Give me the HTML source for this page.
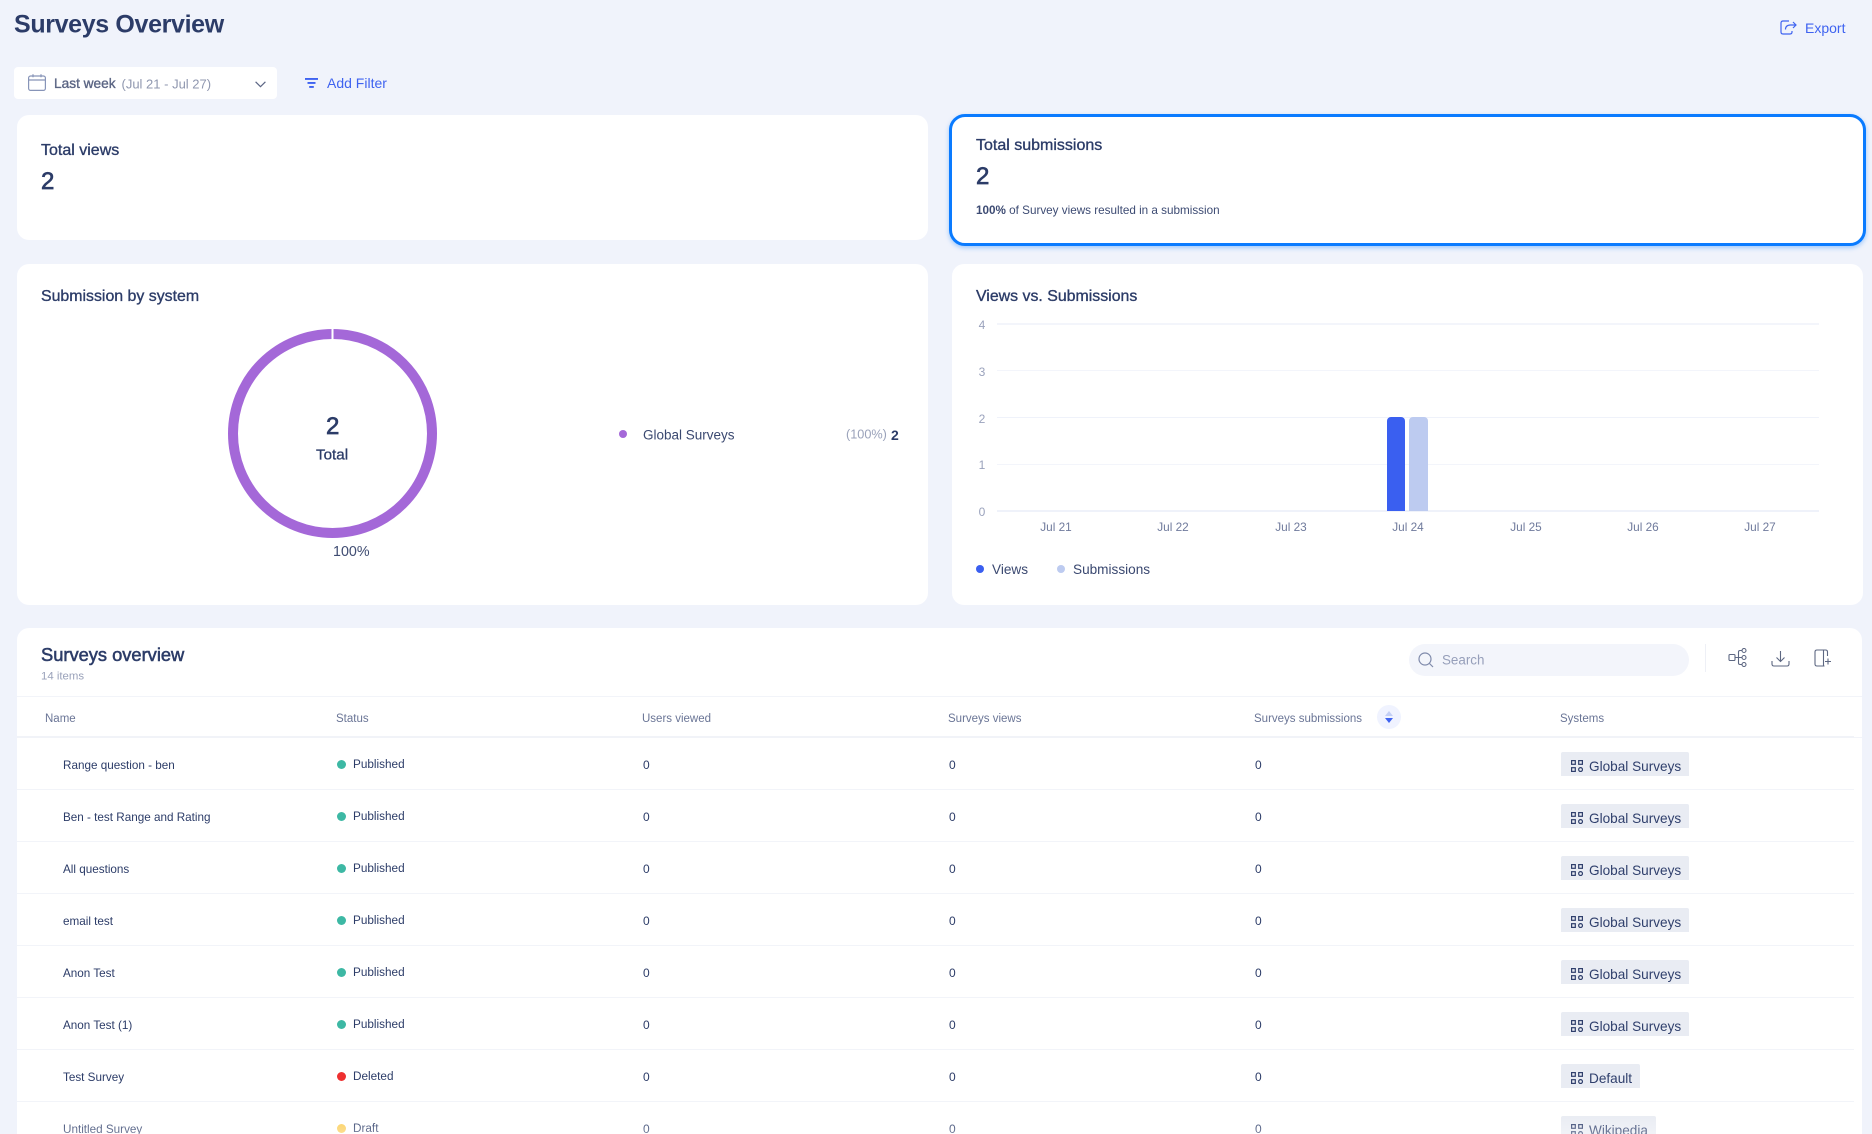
<!DOCTYPE html>
<html><head><meta charset="utf-8"><title>Surveys Overview</title>
<style>
html,body{margin:0;padding:0;width:1872px;height:1134px;overflow:hidden;background:#f0f3fb}
body{position:relative;font-family:"Liberation Sans",sans-serif;color:#2c3c68;filter:blur(.3px)}
.c{position:absolute;background:#fff;border-radius:12px;box-sizing:border-box}
.t{position:absolute;white-space:nowrap;transform:translateY(-50%);line-height:1}
.m{-webkit-text-stroke:.35px currentColor}
.d{position:absolute;border-radius:50%}
.g{position:absolute;left:997px;width:822px;background:#f3f5fb}
.x{position:absolute;top:520px;width:60px;text-align:center;font-size:11.8px;color:#6f7a9c;line-height:14px}
.y{position:absolute;left:976px;width:12px;text-align:center;font-size:12px;color:#9aa2bc;line-height:14px}
.h{position:absolute;top:712px;font-size:11.5px;line-height:14px;color:#6a7596;white-space:nowrap}
.r{position:absolute;left:17px;width:1837px;height:52px;border-bottom:1px solid #f2f4f9;box-sizing:border-box}
.r>*{position:absolute;white-space:nowrap}
.n{left:46px;top:20.5px;font-size:11.7px;line-height:14px}
.o{left:319.5px;top:21.5px;width:9px;height:9px;border-radius:50%}
.s{left:336px;top:19.5px;font-size:11.75px;line-height:14px}
.z{top:19.5px;font-size:12px;line-height:14px}
.a{left:1544px;top:14px;height:24px;background:#e9ecf3;border-radius:2px 2px 0 0;overflow:hidden;font-size:13.6px;line-height:30px;padding:0 8px 0 28px;color:#2f3f6c}
.a svg{position:absolute;left:10px;top:8px}
svg{display:block}
</style></head><body>
<svg width="0" height="0" style="position:absolute"><defs><symbol id="gr" viewBox="0 0 12 12"><g fill="none" stroke="#2f3f6c" stroke-width="1.2"><rect x=".6" y=".6" width="3.7" height="3.7"/><rect x="7.700" y=".6" width="3.7" height="3.7"/><rect x=".6" y="7.700" width="3.7" height="3.7"/><circle cx="9.550" cy="9.550" r="1.900"/></g></symbol></defs></svg>

<div class="t" style="left:14px;top:25px;font-size:25px;font-weight:700;color:#2c3c68;letter-spacing:-.35px">Surveys Overview</div>
<svg style="position:absolute;left:1780px;top:20px" width="17" height="15" viewBox="0 0 17 15" fill="none" stroke="#3f63f0" stroke-width="1.2"><path d="M9 1H3Q1 1 1 3v9q0 2 2 2h7q2 0 2-2v-1"/><path d="M5.5 9.500q0-4.500 5-4.500H16M13 2l3 3-3 3"/></svg>
<div class="t" style="left:1805px;top:28px;font-size:14px;color:#3f63f0">Export</div>

<div class="c" style="left:14px;top:67px;width:263px;height:32px;border-radius:4px"></div>
<svg style="position:absolute;left:28px;top:74px" width="18" height="17" viewBox="0 0 18 17" fill="none" stroke="#8794b8" stroke-width="1.2"><rect x=".6" y="2" width="16.8" height="14.4" rx="2"/><path d="M.6 6h16.8M5 .3v3M13 .3v3"/></svg>
<div class="t m" style="left:54px;top:83.500px;font-size:13.700px;color:#5b6584;-webkit-text-stroke-width:.35px">Last week</div>
<div class="t" style="left:121.500px;top:83.500px;font-size:13px;color:#8f97af">(Jul 21 - Jul 27)</div>
<svg style="position:absolute;left:255px;top:81px" width="11" height="7" viewBox="0 0 11 7" fill="none" stroke="#5b6584" stroke-width="1.2"><path d="M.6.8l4.9 4.9L10.4.8"/></svg>
<svg style="position:absolute;left:305px;top:78px" width="13" height="10" viewBox="0 0 13 10" fill="#3f63f0"><rect width="13" height="1.900"/><rect x="2.500" y="4" width="8" height="1.900"/><rect x="4.200" y="8" width="4.600" height="1.900"/></svg>
<div class="t" style="left:327px;top:83px;font-size:14px;color:#3f63f0">Add Filter</div>

<div class="c" style="left:17px;top:115px;width:911px;height:125px"></div>
<div class="t m" style="left:41px;top:151px;font-size:16px">Total views</div>
<div class="t m" style="left:41px;top:182px;font-size:24px;-webkit-text-stroke-width:.7px">2</div>

<div class="c" style="left:949px;top:114px;width:917px;height:132px;border:3px solid #0a7bff;border-radius:16px;box-shadow:0 2px 5px rgba(10,123,255,.35)"></div>
<div class="t m" style="left:976px;top:146px;font-size:16px">Total submissions</div>
<div class="t m" style="left:976px;top:177px;font-size:24px;-webkit-text-stroke-width:.7px">2</div>
<div class="t" style="left:976px;top:211px;font-size:11.7px;color:#3d4b73"><b>100%</b> of Survey views resulted in a submission</div>

<div class="c" style="left:17px;top:264px;width:911px;height:341px"></div>
<div class="t m" style="left:41px;top:297px;font-size:15.900px">Submission by system</div>
<svg style="position:absolute;left:228px;top:329px" width="209" height="209" viewBox="0 0 209 209"><circle cx="104.500" cy="104.500" r="99.500" fill="none" stroke="#a468d8" stroke-width="10"/><rect x="103.500" y="0" width="2" height="11" fill="#fff"/></svg>
<div class="t m" style="left:326px;top:427px;font-size:24px;-webkit-text-stroke-width:.7px">2</div>
<div class="t m" style="left:316px;top:455px;font-size:15.200px;-webkit-text-stroke-width:.3px">Total</div>
<div class="t" style="left:333px;top:551.500px;font-size:14.300px;color:#3f4c72">100%</div>
<div class="d" style="left:619px;top:430px;width:8px;height:8px;background:#a468d8"></div>
<div class="t" style="left:643px;top:435px;font-size:13.500px;color:#3a4870">Global Surveys</div>
<div class="t" style="left:846px;top:435px;font-size:12.700px;color:#9aa2ba">(100%)</div>
<div class="t" style="left:891px;top:435px;font-size:14px;font-weight:700">2</div>

<div class="c" style="left:952px;top:264px;width:911px;height:341px"></div>
<div class="t m" style="left:976px;top:297px;font-size:15.900px">Views vs. Submissions</div>
<div class="g" style="top:323px;height:2px"></div>
<div class="g" style="top:370px;height:1px"></div>
<div class="g" style="top:416.500px;height:1.500px;background:#eff2fa"></div>
<div class="g" style="top:464px;height:1px"></div>
<div class="g" style="top:510px;height:2px;background:#eff2fa"></div>
<div class="y" style="top:318px">4</div><div class="y" style="top:365px">3</div><div class="y" style="top:412px">2</div><div class="y" style="top:458px">1</div><div class="y" style="top:505px">0</div>
<div style="position:absolute;left:1387px;top:417px;width:18px;height:94px;background:#3a5ff0;border-radius:4px 4px 0 0"></div>
<div style="position:absolute;left:1409px;top:417px;width:18.500px;height:94px;background:#bdcbf0;border-radius:4px 4px 0 0"></div>
<div class="x" style="left:1026px">Jul 21</div><div class="x" style="left:1143px">Jul 22</div><div class="x" style="left:1261px">Jul 23</div><div class="x" style="left:1378px">Jul 24</div><div class="x" style="left:1496px">Jul 25</div><div class="x" style="left:1613px">Jul 26</div><div class="x" style="left:1730px">Jul 27</div>
<div class="d" style="left:976px;top:565px;width:8px;height:8px;background:#3a5ff0"></div>
<div class="t" style="left:992px;top:569.500px;font-size:13.600px;color:#3a4870">Views</div>
<div class="d" style="left:1057px;top:565px;width:8px;height:8px;background:#bdcbf0"></div>
<div class="t" style="left:1073px;top:569.500px;font-size:13.600px;color:#3a4870">Submissions</div>

<div class="c" style="left:17px;top:628px;width:1845px;height:520px"></div>
<div class="t m" style="left:41px;top:655px;font-size:18.300px;-webkit-text-stroke-width:.55px">Surveys overview</div>
<div class="t" style="left:41px;top:677px;font-size:11.400px;color:#9aa2ba">14 items</div>
<div style="position:absolute;left:1409px;top:644px;width:280px;height:32px;border-radius:16px;background:#f3f5fb"></div>
<svg style="position:absolute;left:1418px;top:652px" width="16" height="16" viewBox="0 0 16 16" fill="none" stroke="#7f8aab" stroke-width="1.2"><circle cx="7" cy="7" r="6"/><path d="M11.500 11.500L15 15"/></svg>
<div class="t" style="left:1442px;top:660px;font-size:13.400px;color:#969fba">Search</div>
<div style="position:absolute;left:1705px;top:644px;width:1px;height:28px;background:#eef0f6"></div>
<svg style="position:absolute;left:1728px;top:648px" width="20" height="19" viewBox="0 0 20 19" fill="none" stroke="#5d6782" stroke-width="1.1"><rect x="1" y="6.500" width="6" height="6" rx="1"/><path d="M7 9.500h7M10.500 4v11q0 1.500 1.500 1.500h2M10.500 4q0-1.500 1.500-1.500h2"/><circle cx="16" cy="2.500" r="2"/><circle cx="16" cy="9.500" r="2"/><circle cx="16" cy="16.500" r="2"/></svg>
<svg style="position:absolute;left:1771px;top:650px" width="19" height="17" viewBox="0 0 19 17" fill="none" stroke="#5d6782" stroke-width="1.1"><path d="M9.500 1v10M5.500 7.500l4 4 4-4"/><path d="M1 11v3q0 2 2 2h13q2 0 2-2v-3"/></svg>
<svg style="position:absolute;left:1814px;top:649px" width="18" height="18" viewBox="0 0 18 18" fill="none" stroke="#5d6782" stroke-width="1.1"><path d="M13.500 7V3q0-2-2-2H3Q1 1 1 3v12q0 2 2 2h6.500V1"/><path d="M9.500 17h1M14 9.500v6M11 12.500h6"/></svg>
<div style="position:absolute;left:17px;top:696px;width:1845px;height:1px;background:#f2f4f9"></div>
<div class="h" style="left:45px">Name</div>
<div class="h" style="left:336px">Status</div>
<div class="h" style="left:642px">Users viewed</div>
<div class="h" style="left:948px">Surveys views</div>
<div class="h" style="left:1254px">Surveys submissions</div>
<div class="h" style="left:1560px">Systems</div>
<div style="position:absolute;left:1377px;top:705px;width:24px;height:24px;border-radius:12px;background:#f0f3ff"></div>
<svg style="position:absolute;left:1385px;top:711px" width="8" height="12" viewBox="0 0 8 12"><path d="M4 0L8 5H0z" fill="#c3cff5"/><path d="M0 7h8l-4 5z" fill="#3f63f0"/></svg>
<div style="position:absolute;left:17px;top:736px;width:1837px;height:2px;background:#f1f3f8"></div>
<div style="position:absolute;left:1854px;top:737px;width:8px;height:1px;background:#f2f4f9"></div>

<div class="r" style="top:738px"><span class="n">Range question - ben</span><i class="o" style="background:#3db8a4"></i><span class="s">Published</span><span class="z" style="left:626px">0</span><span class="z" style="left:932px">0</span><span class="z" style="left:1238px">0</span><span class="a"><svg width="12" height="12"><use href="#gr"/></svg>Global Surveys</span></div>
<div class="r" style="top:790px"><span class="n">Ben - test Range and Rating</span><i class="o" style="background:#3db8a4"></i><span class="s">Published</span><span class="z" style="left:626px">0</span><span class="z" style="left:932px">0</span><span class="z" style="left:1238px">0</span><span class="a"><svg width="12" height="12"><use href="#gr"/></svg>Global Surveys</span></div>
<div class="r" style="top:842px"><span class="n">All questions</span><i class="o" style="background:#3db8a4"></i><span class="s">Published</span><span class="z" style="left:626px">0</span><span class="z" style="left:932px">0</span><span class="z" style="left:1238px">0</span><span class="a"><svg width="12" height="12"><use href="#gr"/></svg>Global Surveys</span></div>
<div class="r" style="top:894px"><span class="n">email test</span><i class="o" style="background:#3db8a4"></i><span class="s">Published</span><span class="z" style="left:626px">0</span><span class="z" style="left:932px">0</span><span class="z" style="left:1238px">0</span><span class="a"><svg width="12" height="12"><use href="#gr"/></svg>Global Surveys</span></div>
<div class="r" style="top:946px"><span class="n">Anon Test</span><i class="o" style="background:#3db8a4"></i><span class="s">Published</span><span class="z" style="left:626px">0</span><span class="z" style="left:932px">0</span><span class="z" style="left:1238px">0</span><span class="a"><svg width="12" height="12"><use href="#gr"/></svg>Global Surveys</span></div>
<div class="r" style="top:998px"><span class="n">Anon Test (1)</span><i class="o" style="background:#3db8a4"></i><span class="s">Published</span><span class="z" style="left:626px">0</span><span class="z" style="left:932px">0</span><span class="z" style="left:1238px">0</span><span class="a"><svg width="12" height="12"><use href="#gr"/></svg>Global Surveys</span></div>
<div class="r" style="top:1050px"><span class="n">Test Survey</span><i class="o" style="background:#ee3030"></i><span class="s">Deleted</span><span class="z" style="left:626px">0</span><span class="z" style="left:932px">0</span><span class="z" style="left:1238px">0</span><span class="a"><svg width="12" height="12"><use href="#gr"/></svg>Default</span></div>
<div class="r" style="top:1102px"><span class="n">Untitled Survey</span><i class="o" style="background:#fbcd56"></i><span class="s">Draft</span><span class="z" style="left:626px">0</span><span class="z" style="left:932px">0</span><span class="z" style="left:1238px">0</span><span class="a"><svg width="12" height="12"><use href="#gr"/></svg>Wikipedia</span></div>
<div style="position:absolute;left:17px;top:1114px;width:1845px;height:20px;background:linear-gradient(rgba(255,255,255,0),rgba(255,255,255,.35))"></div>
</body></html>
